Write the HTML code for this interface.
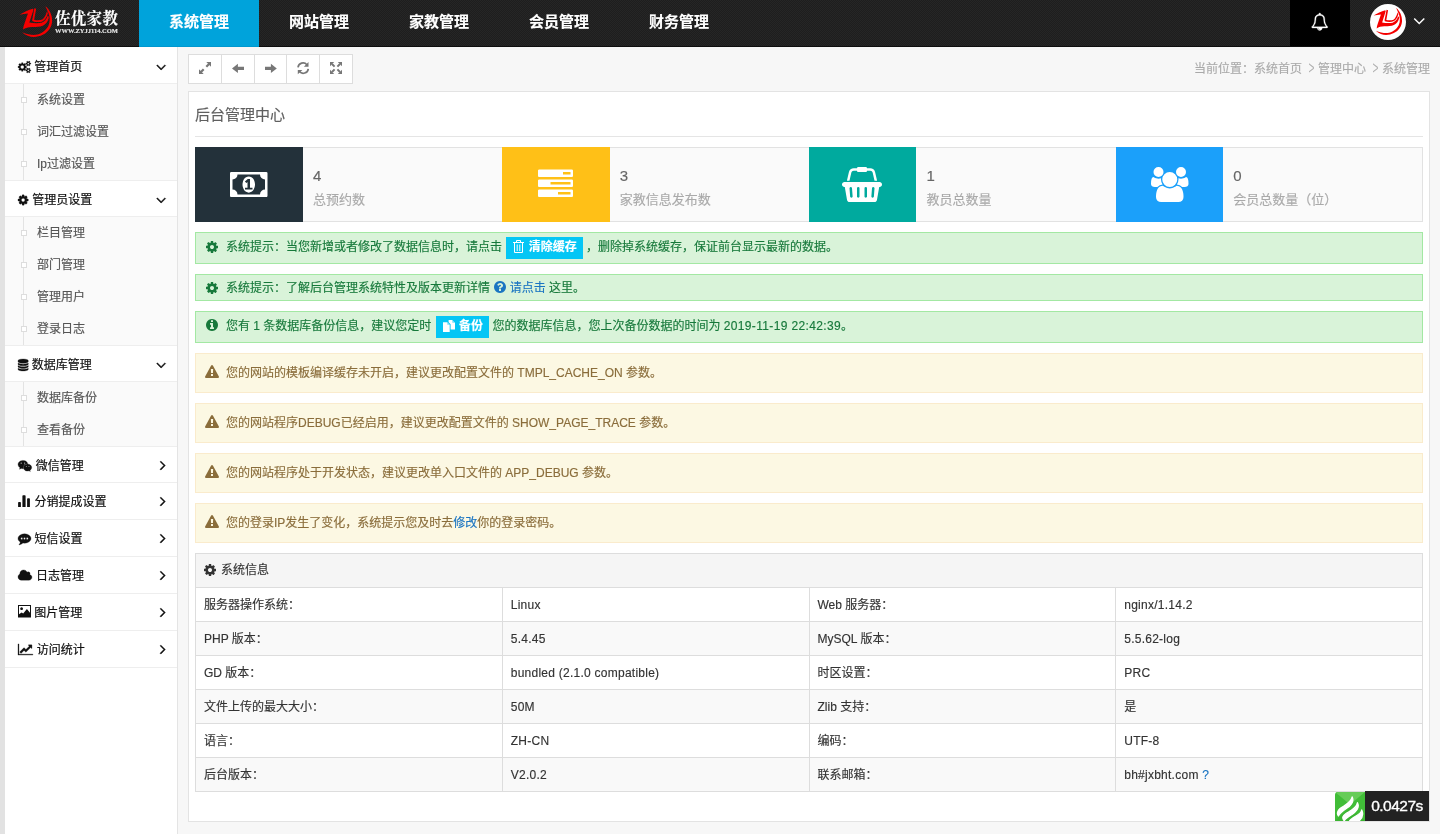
<!DOCTYPE html>
<html lang="zh-CN"><head><meta charset="utf-8"><title>后台管理中心</title>
<style>
*{box-sizing:border-box}
html,body{margin:0;padding:0}
#wrap{position:absolute;left:0;top:0;width:1440px;height:834px;will-change:transform}
body{width:1440px;height:834px;overflow:hidden;background:#f7f7f7;font-family:"Liberation Sans","Noto Sans CJK SC",sans-serif;font-size:12px;color:#333;position:relative;-webkit-text-stroke:.150px}
svg.fa,svg.ci{display:inline-block;vertical-align:middle;overflow:visible}
a{text-decoration:none;color:#1b75c2}
/* header */
#hd{position:absolute;left:0;top:0;width:1440px;height:47px;background-color:#222;background-image:repeating-conic-gradient(#1e1e1e 0 25%,#262626 0 50%);background-size:2px 2px;border-bottom:1px solid #0e0e0e}
#logo{position:absolute;left:0;top:0;width:139px;height:46px}
#logo .cn{position:absolute;left:55px;top:9px;font-family:"Liberation Serif","Noto Serif CJK SC",serif;font-weight:700;font-size:15.5px;line-height:20px;color:#fff;letter-spacing:.3px;white-space:nowrap}
#logo .en{position:absolute;left:55px;top:26px;font-family:"Liberation Serif","Noto Serif CJK SC",serif;font-weight:700;font-size:6.5px;line-height:9px;color:#e4e4e4;letter-spacing:0;white-space:nowrap}
#nav{position:absolute;left:139px;top:0;height:46px}
#nav a{float:left;width:120px;height:46px;line-height:44px;text-align:center;color:#fff;font-size:15px;font-weight:700}
#nav a.on{background:#00a3db;height:47px;box-shadow:inset 0 -1px 0 #0098cf}
#bell{position:absolute;left:1290px;top:0;width:60px;height:46px;background:#000;text-align:center;line-height:42px;color:#fff}
#bell path{stroke:#fff;stroke-width:30}
#bc i{font-style:normal;display:inline-block;width:16px;text-align:center;font-size:13px;color:#b0b0b0;transform:translate(1.500px,-.700px) scale(.78,1.38);-webkit-text-stroke:0}
#ava{position:absolute;left:1370px;top:4px;width:36px;height:36px;border-radius:50%;background:#fff;overflow:hidden}
#dd{position:absolute;left:1412.700px;top:11px;color:#fff;line-height:16px}
/* sidebar */
#strip{position:absolute;left:0;top:47px;width:5px;height:787px;background:#e2e2e2}
#side{position:absolute;left:5px;top:47px;width:173px;height:787px;background:#fff;border-right:1px solid #e4e4e4}
.mh{position:relative;height:37px;border-bottom:1px solid #eee;line-height:39px;padding-left:13px;color:#111;font-weight:400;white-space:nowrap}
.mh svg.fa,.mh svg.ci{position:relative;top:-1.400px}
.mh:first-child .t{top:1px}
.mh:first-child svg.fa,.sub+.mh svg.fa{top:.300px}
.mh:first-child .ar svg.fa,.sub+.mh .ar svg.fa{top:-.400px;left:-.700px}
.mh .ar svg.fa{left:-1px;top:-2.200px}
.sub+.mh.r4 .ar svg.fa{left:-1px;top:-.900px}
.mh svg.fa path{stroke:#111;stroke-width:40}
.mh .t{position:absolute;top:0;-webkit-text-stroke:.2px #111}
.mh .mi{position:absolute;left:13px;top:0}
.mh .ar{position:absolute;right:10px;top:.800px}
.sub{position:relative;background:#fafafa}
.sub+.mh{border-top:1px solid #eee;line-height:37px}
.sub+.mh .t{top:1px}
.sub+.mh .ar{top:.300px}
.sub:before{content:"";position:absolute;left:18px;top:0;bottom:0;width:1px;background:#e3e3e3}
.sub div{position:relative;height:32px;line-height:33px;padding-left:32px;color:#555}
.sub div:before{content:"";position:absolute;left:16px;top:13px;width:4px;height:4px;background:#fff;border:1px solid #ddd}
/* main */
#tb{position:absolute;left:188px;top:54px;height:30px;width:165px;background:#fff;border:1px solid #ddd}
#tb span{flex:1;border-left:1px solid #ddd;text-align:center;line-height:26px;color:#777}
#tb span:first-child{border-left:0}
#bc{position:absolute;right:10px;top:60px;line-height:18px;color:#aaa;white-space:nowrap}
#panel{position:absolute;left:188px;top:91px;width:1242px;height:731px;background:#fff;border:1px solid #e3e3e3}
#title{position:absolute;left:6px;top:13px;font-size:15px;line-height:20px;color:#5f5f5f}
#hr{position:absolute;left:6px;top:44px;width:1228px;height:1px;background:#e5e5e5}
#stats{position:absolute;left:6px;top:55px;width:1228px;height:75px;background:#fafafa;border:1px solid #e2e2e2}
.st{position:absolute;top:-1px;height:75px;width:307px}
.st .ib{position:absolute;left:0;top:0;width:108px;height:75px;text-align:center;line-height:74px;color:#fff}
.st .n{position:absolute;left:118px;top:20px;font-size:15px;line-height:18px;color:#666}
.st .l{position:absolute;left:118px;top:44px;font-size:13px;line-height:18px;color:#aaa;white-space:nowrap}
.al{position:absolute;left:6px;width:1228px;border:1px solid #a3e8a3;background:#d9f3d9;color:#17793b;padding-left:30px;white-space:nowrap}
.al .ic{position:absolute;left:10.250px;top:6.500px;line-height:0}
.al .ic svg{display:block}
.al.w .ic{left:9px;top:11.200px}
.al.w{border-color:#faebcc;background:#fcf8e3;color:#8a6d3b;height:40px;line-height:39px}
.btn{display:inline-block;background:#04c6f5;color:#fff;font-weight:700;height:22px;line-height:21px;padding:0 6px 0 7px;vertical-align:middle;margin:0 0 0 1px;position:relative;top:0}
.btn .gi{vertical-align:middle;margin-right:4.400px;position:relative;top:-1px}
.q{margin-left:1px;position:relative;top:-1.500px}
#tbl{position:absolute;left:6px;top:461px;width:1228px;border:1px solid #ddd}
#tbl .h{height:33px;line-height:33px;background:#f5f5f5;padding-left:8.400px;color:#333}
#tbl .h svg{position:relative;top:-1px;margin-right:1.400px}
#tbl .r{display:flex;height:34px;border-top:1px solid #ddd;line-height:35px}
#tbl .r div.v,.ls{letter-spacing:.250px}
#tbl .r:nth-child(odd){background:#f9f9f9}
#tbl .r div{flex:1;border-left:1px solid #ddd;padding-left:8px;white-space:nowrap}
#tbl .r div:first-child{border-left:0}
#tp{position:absolute;left:1335px;top:791px;width:94px;height:31px}
#tp .g{position:absolute;left:0;top:1px;width:30px;height:29px;background:#41bd38;border-radius:3px 0 0 0;overflow:hidden}
#tp .k{position:absolute;left:30px;top:0;width:64px;height:30px;background:#222;color:#fff;font-size:15.500px;letter-spacing:-.500px;line-height:29px;text-align:center;-webkit-text-stroke:.350px #fff}

</style></head>
<body>
<div id="wrap">
<div id="hd">
  <div id="logo">
    <svg width="48" height="40" viewBox="0 0 1001 834" style="position:absolute;left:14px;top:2px"><path fill="#f40000" d="M655 88C740 150 800 280 795 400C790 520 720 620 600 685C500 735 380 745 290 705C240 685 200 660 170 630C260 670 360 690 450 685C560 675 660 600 715 500C760 410 750 290 700 190C690 160 670 120 655 88ZM115 265C200 215 300 165 395 140L405 165L320 430C400 445 500 450 570 435C640 415 680 350 700 290L725 300C730 350 700 420 640 470C580 520 480 525 400 520C320 515 240 530 190 575C190 540 200 500 215 460L290 240C230 245 170 255 115 265ZM425 128L462 140L420 370C470 385 540 385 590 365C640 340 670 260 690 190L705 240C690 300 650 380 590 405C530 425 440 420 385 400L378 380Z"/></svg>
    <div class="cn">佐优家教</div>
    <div class="en">WWW.ZYJJ114.COM</div>
  </div>
  <div id="nav"><a class="on">系统管理</a><a>网站管理</a><a>家教管理</a><a>会员管理</a><a>财务管理</a></div>
  <div id="bell"><svg class="fa " width="17.50" height="17.5" viewBox="0 -1536 1792 1792" style=""><path fill="#fff" transform="scale(1,-1)" d="M912 -160q0 16 -16 16q-59 0 -101.5 42.5t-42.5 101.5q0 16 -16 16t-16 -16q0 -73 51.5 -124.5t124.5 -51.5q16 0 16 16zM246 128h1300q-266 300 -266 832q0 51 -24 105t-69 103t-121.5 80.5t-169.5 31.5t-169.5 -31.5t-121.5 -80.5t-69 -103t-24 -105q0 -532 -266 -832z
M1728 128q0 -52 -38 -90t-90 -38h-448q0 -106 -75 -181t-181 -75t-181 75t-75 181h-448q-52 0 -90 38t-38 90q50 42 91 88t85 119.5t74.5 158.5t50 206t19.5 260q0 152 117 282.5t307 158.5q-8 19 -8 39q0 40 28 68t68 28t68 -28t28 -68q0 -20 -8 -39q190 -28 307 -158.5
t117 -282.5q0 -139 19.5 -260t50 -206t74.5 -158.5t85 -119.5t91 -88z"/></svg></div>
  <div id="ava"><svg width="36" height="36" viewBox="30 -10 860 860"><path fill="#f40000" d="M655 88C740 150 800 280 795 400C790 520 720 620 600 685C500 735 380 745 290 705C240 685 200 660 170 630C260 670 360 690 450 685C560 675 660 600 715 500C760 410 750 290 700 190C690 160 670 120 655 88ZM115 265C200 215 300 165 395 140L405 165L320 430C400 445 500 450 570 435C640 415 680 350 700 290L725 300C730 350 700 420 640 470C580 520 480 525 400 520C320 515 240 530 190 575C190 540 200 500 215 460L290 240C230 245 170 255 115 265ZM425 128L462 140L420 370C470 385 540 385 590 365C640 340 670 260 690 190L705 240C690 300 650 380 590 405C530 425 440 420 385 400L378 380Z"/></svg></div>
  <div id="dd"><svg class="fa " width="12.54" height="19.5" viewBox="0 -1536 1152 1792" style=""><path fill="#fff" transform="scale(1,-1)" d="M1075 800q0 -13 -10 -23l-466 -466q-10 -10 -23 -10t-23 10l-466 466q-10 10 -10 23t10 23l50 50q10 10 23 10t23 -10l393 -393l393 393q10 10 23 10t23 -10l50 -50q10 -10 10 -23z"/></svg></div>
</div>
<div id="strip"></div>
<div id="side">
  <div class="mh"><span class="mi"><svg class="fa " width="12.86" height="12" viewBox="0 -1536 1920 1792" style=""><path fill="#111" transform="scale(1,-1)" d="M896 640q0 106 -75 181t-181 75t-181 -75t-75 -181t75 -181t181 -75t181 75t75 181zM1664 128q0 52 -38 90t-90 38t-90 -38t-38 -90q0 -53 37.5 -90.5t90.5 -37.5t90.5 37.5t37.5 90.5zM1664 1152q0 52 -38 90t-90 38t-90 -38t-38 -90q0 -53 37.5 -90.5t90.5 -37.5
t90.5 37.5t37.5 90.5zM1280 731v-185q0 -10 -7 -19.5t-16 -10.5l-155 -24q-11 -35 -32 -76q34 -48 90 -115q7 -11 7 -20q0 -12 -7 -19q-23 -30 -82.5 -89.5t-78.5 -59.5q-11 0 -21 7l-115 90q-37 -19 -77 -31q-11 -108 -23 -155q-7 -24 -30 -24h-186q-11 0 -20 7.5t-10 17.5
l-23 153q-34 10 -75 31l-118 -89q-7 -7 -20 -7q-11 0 -21 8q-144 133 -144 160q0 9 7 19q10 14 41 53t47 61q-23 44 -35 82l-152 24q-10 1 -17 9.5t-7 19.5v185q0 10 7 19.5t16 10.5l155 24q11 35 32 76q-34 48 -90 115q-7 11 -7 20q0 12 7 20q22 30 82 89t79 59q11 0 21 -7
l115 -90q34 18 77 32q11 108 23 154q7 24 30 24h186q11 0 20 -7.5t10 -17.5l23 -153q34 -10 75 -31l118 89q8 7 20 7q11 0 21 -8q144 -133 144 -160q0 -8 -7 -19q-12 -16 -42 -54t-45 -60q23 -48 34 -82l152 -23q10 -2 17 -10.5t7 -19.5zM1920 198v-140q0 -16 -149 -31
q-12 -27 -30 -52q51 -113 51 -138q0 -4 -4 -7q-122 -71 -124 -71q-8 0 -46 47t-52 68q-20 -2 -30 -2t-30 2q-14 -21 -52 -68t-46 -47q-2 0 -124 71q-4 3 -4 7q0 25 51 138q-18 25 -30 52q-149 15 -149 31v140q0 16 149 31q13 29 30 52q-51 113 -51 138q0 4 4 7q4 2 35 20
t59 34t30 16q8 0 46 -46.5t52 -67.5q20 2 30 2t30 -2q51 71 92 112l6 2q4 0 124 -70q4 -3 4 -7q0 -25 -51 -138q17 -23 30 -52q149 -15 149 -31zM1920 1222v-140q0 -16 -149 -31q-12 -27 -30 -52q51 -113 51 -138q0 -4 -4 -7q-122 -71 -124 -71q-8 0 -46 47t-52 68
q-20 -2 -30 -2t-30 2q-14 -21 -52 -68t-46 -47q-2 0 -124 71q-4 3 -4 7q0 25 51 138q-18 25 -30 52q-149 15 -149 31v140q0 16 149 31q13 29 30 52q-51 113 -51 138q0 4 4 7q4 2 35 20t59 34t30 16q8 0 46 -46.5t52 -67.5q20 2 30 2t30 -2q51 71 92 112l6 2q4 0 124 -70
q4 -3 4 -7q0 -25 -51 -138q17 -23 30 -52q149 -15 149 -31z"/></svg></span><span class="t" style="left:29.30px">管理首页</span><span class="ar"><svg class="fa " width="10.29" height="16" viewBox="0 -1536 1152 1792" style=""><path fill="#111" transform="scale(1,-1)" d="M1075 800q0 -13 -10 -23l-466 -466q-10 -10 -23 -10t-23 10l-466 466q-10 10 -10 23t10 23l50 50q10 10 23 10t23 -10l393 -393l393 393q10 10 23 10t23 -10l50 -50q10 -10 10 -23z"/></svg></span></div>
  <div class="sub"><div>系统设置</div><div>词汇过滤设置</div><div>Ip过滤设置</div></div>
  <div class="mh"><span class="mi"><svg class="fa " width="10.29" height="12" viewBox="0 -1536 1536 1792" style=""><path fill="#111" transform="scale(1,-1)" d="M1024 640q0 106 -75 181t-181 75t-181 -75t-75 -181t75 -181t181 -75t181 75t75 181zM1536 749v-222q0 -12 -8 -23t-20 -13l-185 -28q-19 -54 -39 -91q35 -50 107 -138q10 -12 10 -25t-9 -23q-27 -37 -99 -108t-94 -71q-12 0 -26 9l-138 108q-44 -23 -91 -38
q-16 -136 -29 -186q-7 -28 -36 -28h-222q-14 0 -24.5 8.5t-11.5 21.5l-28 184q-49 16 -90 37l-141 -107q-10 -9 -25 -9q-14 0 -25 11q-126 114 -165 168q-7 10 -7 23q0 12 8 23q15 21 51 66.5t54 70.5q-27 50 -41 99l-183 27q-13 2 -21 12.5t-8 23.5v222q0 12 8 23t19 13
l186 28q14 46 39 92q-40 57 -107 138q-10 12 -10 24q0 10 9 23q26 36 98.5 107.5t94.5 71.5q13 0 26 -10l138 -107q44 23 91 38q16 136 29 186q7 28 36 28h222q14 0 24.5 -8.5t11.5 -21.5l28 -184q49 -16 90 -37l142 107q9 9 24 9q13 0 25 -10q129 -119 165 -170q7 -8 7 -22
q0 -12 -8 -23q-15 -21 -51 -66.5t-54 -70.5q26 -50 41 -98l183 -28q13 -2 21 -12.5t8 -23.5z"/></svg></span><span class="t" style="left:27.30px">管理员设置</span><span class="ar"><svg class="fa " width="10.29" height="16" viewBox="0 -1536 1152 1792" style=""><path fill="#111" transform="scale(1,-1)" d="M1075 800q0 -13 -10 -23l-466 -466q-10 -10 -23 -10t-23 10l-466 466q-10 10 -10 23t10 23l50 50q10 10 23 10t23 -10l393 -393l393 393q10 10 23 10t23 -10l50 -50q10 -10 10 -23z"/></svg></span></div>
  <div class="sub"><div>栏目管理</div><div>部门管理</div><div>管理用户</div><div>登录日志</div></div>
  <div class="mh"><span class="mi"><svg class="fa " width="10.29" height="12" viewBox="0 -1536 1536 1792" style=""><path fill="#111" transform="scale(1,-1)" d="M768 768q237 0 443 43t325 127v-170q0 -69 -103 -128t-280 -93.5t-385 -34.5t-385 34.5t-280 93.5t-103 128v170q119 -84 325 -127t443 -43zM768 0q237 0 443 43t325 127v-170q0 -69 -103 -128t-280 -93.5t-385 -34.5t-385 34.5t-280 93.5t-103 128v170q119 -84 325 -127
t443 -43zM768 384q237 0 443 43t325 127v-170q0 -69 -103 -128t-280 -93.5t-385 -34.5t-385 34.5t-280 93.5t-103 128v170q119 -84 325 -127t443 -43zM768 1536q208 0 385 -34.5t280 -93.5t103 -128v-128q0 -69 -103 -128t-280 -93.5t-385 -34.5t-385 34.5t-280 93.5
t-103 128v128q0 69 103 128t280 93.5t385 34.5z"/></svg></span><span class="t" style="left:26.70px">数据库管理</span><span class="ar"><svg class="fa " width="10.29" height="16" viewBox="0 -1536 1152 1792" style=""><path fill="#111" transform="scale(1,-1)" d="M1075 800q0 -13 -10 -23l-466 -466q-10 -10 -23 -10t-23 10l-466 466q-10 10 -10 23t10 23l50 50q10 10 23 10t23 -10l393 -393l393 393q10 10 23 10t23 -10l50 -50q10 -10 10 -23z"/></svg></span></div>
  <div class="sub"><div>数据库备份</div><div>查看备份</div></div>
  <div class="mh r4"><span class="mi"><svg class="fa " width="13.71" height="12" viewBox="0 -1536 2048 1792" style=""><path fill="#111" transform="scale(1,-1)" d="M580 1075q0 41 -25 66t-66 25q-43 0 -76 -25.5t-33 -65.5q0 -39 33 -64.5t76 -25.5q41 0 66 24.5t25 65.5zM1323 568q0 28 -25.5 50t-65.5 22q-27 0 -49.5 -22.5t-22.5 -49.5q0 -28 22.5 -50.5t49.5 -22.5q40 0 65.5 22t25.5 51zM1087 1075q0 41 -24.5 66t-65.5 25
q-43 0 -76 -25.5t-33 -65.5q0 -39 33 -64.5t76 -25.5q41 0 65.5 24.5t24.5 65.5zM1722 568q0 28 -26 50t-65 22q-27 0 -49.5 -22.5t-22.5 -49.5q0 -28 22.5 -50.5t49.5 -22.5q39 0 65 22t26 51zM1456 965q-31 4 -70 4q-169 0 -311 -77t-223.5 -208.5t-81.5 -287.5
q0 -78 23 -152q-35 -3 -68 -3q-26 0 -50 1.5t-55 6.5t-44.5 7t-54.5 10.5t-50 10.5l-253 -127l72 218q-290 203 -290 490q0 169 97.5 311t264 223.5t363.5 81.5q176 0 332.5 -66t262 -182.5t136.5 -260.5zM2048 404q0 -117 -68.5 -223.5t-185.5 -193.5l55 -181l-199 109
q-150 -37 -218 -37q-169 0 -311 70.5t-223.5 191.5t-81.5 264t81.5 264t223.5 191.5t311 70.5q161 0 303 -70.5t227.5 -192t85.5 -263.5z"/></svg></span><span class="t" style="left:30.75px">微信管理</span><span class="ar"><svg class="fa " width="5.71" height="16" viewBox="0 -1536 640 1792" style=""><path fill="#111" transform="scale(1,-1)" d="M595 576q0 -13 -10 -23l-466 -466q-10 -10 -23 -10t-23 10l-50 50q-10 10 -10 23t10 23l393 393l-393 393q-10 10 -10 23t10 23l50 50q10 10 23 10t23 -10l466 -466q10 -10 10 -23z"/></svg></span></div>
  <div class="mh"><span class="mi"><svg class="ci" width="12" height="12" viewBox="0 0 12 12" style="top:-1.600px"><path fill="#111" d="M.100 7.800Q.100 7 .900 7H2.100Q2.900 7 2.900 7.800V11.900H.100ZM4.400 1Q4.400 .150 5.200 .150H6.800Q7.600 .150 7.600 1V11.900H4.400ZM9.100 4.100Q9.100 3.300 9.900 3.300H11.100Q11.900 3.300 11.900 4.100V11.900H9.100Z"/></svg></span><span class="t" style="left:29.50px">分销提成设置</span><span class="ar"><svg class="fa " width="5.71" height="16" viewBox="0 -1536 640 1792" style=""><path fill="#111" transform="scale(1,-1)" d="M595 576q0 -13 -10 -23l-466 -466q-10 -10 -23 -10t-23 10l-50 50q-10 10 -10 23t10 23l393 393l-393 393q-10 10 -10 23t10 23l50 50q10 10 23 10t23 -10l466 -466q10 -10 10 -23z"/></svg></span></div>
  <div class="mh"><span class="mi"><svg class="fa " width="13.00" height="13" viewBox="0 -1536 1792 1792" style=""><path fill="#111" transform="scale(1,-1)" d="M640 640q0 53 -37.5 90.5t-90.5 37.5t-90.5 -37.5t-37.5 -90.5t37.5 -90.5t90.5 -37.5t90.5 37.5t37.5 90.5zM1024 640q0 53 -37.5 90.5t-90.5 37.5t-90.5 -37.5t-37.5 -90.5t37.5 -90.5t90.5 -37.5t90.5 37.5t37.5 90.5zM1408 640q0 53 -37.5 90.5t-90.5 37.5
t-90.5 -37.5t-37.5 -90.5t37.5 -90.5t90.5 -37.5t90.5 37.5t37.5 90.5zM1792 640q0 -174 -120 -321.5t-326 -233t-450 -85.5q-110 0 -211 18q-173 -173 -435 -229q-52 -10 -86 -13q-12 -1 -22 6t-13 18q-4 15 20 37q5 5 23.5 21.5t25.5 23.5t23.5 25.5t24 31.5t20.5 37
t20 48t14.5 57.5t12.5 72.5q-146 90 -229.5 216.5t-83.5 269.5q0 174 120 321.5t326 233t450 85.5t450 -85.5t326 -233t120 -321.5z"/></svg></span><span class="t" style="left:29.50px">短信设置</span><span class="ar"><svg class="fa " width="5.71" height="16" viewBox="0 -1536 640 1792" style=""><path fill="#111" transform="scale(1,-1)" d="M595 576q0 -13 -10 -23l-466 -466q-10 -10 -23 -10t-23 10l-50 50q-10 10 -10 23t10 23l393 393l-393 393q-10 10 -10 23t10 23l50 50q10 10 23 10t23 -10l466 -466q10 -10 10 -23z"/></svg></span></div>
  <div class="mh"><span class="mi"><svg class="fa " width="13.93" height="13" viewBox="0 -1536 1920 1792" style=""><path fill="#111" transform="scale(1,-1)" d="M1920 384q0 -159 -112.5 -271.5t-271.5 -112.5h-1088q-185 0 -316.5 131.5t-131.5 316.5q0 132 71 241.5t187 163.5q-2 28 -2 43q0 212 150 362t362 150q158 0 286.5 -88t187.5 -230q70 62 166 62q106 0 181 -75t75 -181q0 -75 -41 -138q129 -30 213 -134.5t84 -239.5z
"/></svg></span><span class="t" style="left:31.10px">日志管理</span><span class="ar"><svg class="fa " width="5.71" height="16" viewBox="0 -1536 640 1792" style=""><path fill="#111" transform="scale(1,-1)" d="M595 576q0 -13 -10 -23l-466 -466q-10 -10 -23 -10t-23 10l-50 50q-10 10 -10 23t10 23l393 393l-393 393q-10 10 -10 23t10 23l50 50q10 10 23 10t23 -10l466 -466q10 -10 10 -23z"/></svg></span></div>
  <div class="mh"><span class="mi"><svg class="ci" width="13" height="12.400" viewBox="0 0 13 12.400" style="top:-2.500px"><path fill="#111" fill-rule="evenodd" d="M0 0H13V12.400H0ZM1 1V9.200L3.600 7.400L5.200 8.600L8.900 3.900L12 7.700V1ZM3.600 2.300A1.400 1.400 0 1 1 3.590 2.300Z"/></svg></span><span class="t" style="left:29.30px">图片管理</span><span class="ar"><svg class="fa " width="5.71" height="16" viewBox="0 -1536 640 1792" style=""><path fill="#111" transform="scale(1,-1)" d="M595 576q0 -13 -10 -23l-466 -466q-10 -10 -23 -10t-23 10l-50 50q-10 10 -10 23t10 23l393 393l-393 393q-10 10 -10 23t10 23l50 50q10 10 23 10t23 -10l466 -466q10 -10 10 -23z"/></svg></span></div>
  <div class="mh"><span class="mi"><svg class="fa " width="14.86" height="13" viewBox="0 -1536 2048 1792" style=""><path fill="#111" transform="scale(1,-1)" d="M2048 0v-128h-2048v1536h128v-1408h1920zM1920 1248v-435q0 -21 -19.5 -29.5t-35.5 7.5l-121 121l-633 -633q-10 -10 -23 -10t-23 10l-233 233l-416 -416l-192 192l585 585q10 10 23 10t23 -10l233 -233l464 464l-121 121q-16 16 -7.5 35.5t29.5 19.5h435q14 0 23 -9
t9 -23z"/></svg></span><span class="t" style="left:31.70px">访问统计</span><span class="ar"><svg class="fa " width="5.71" height="16" viewBox="0 -1536 640 1792" style=""><path fill="#111" transform="scale(1,-1)" d="M595 576q0 -13 -10 -23l-466 -466q-10 -10 -23 -10t-23 10l-50 50q-10 10 -10 23t10 23l393 393l-393 393q-10 10 -10 23t10 23l50 50q10 10 23 10t23 -10l466 -466q10 -10 10 -23z"/></svg></span></div>
</div>
<div id="tb"><svg width="166" height="30" viewBox="188 54 166 30" style="position:absolute;left:-1px;top:-1px">
<g fill="none" stroke="#ddd" stroke-width="1"><path d="M221.5 54V84M254.5 54V84M286.5 54V84M319.5 54V84"/></g>
<g fill="#777" stroke="none">
<path d="M211 62H206.300L211 66.700ZM199 74H203.700L199 69.300Z"/>
<path d="M232 68.400L237.900 63.800V66.800H244V70.100H237.900V73Z"/>
<path d="M276.800 68.400L270.900 63.800V66.800H265V70.100H270.900V73Z"/>
<path d="M308.500 61.900V66.700H303.900ZM297.800 69.900H302.400L297.800 74.300Z"/>
<path d="M330 62H334.200L330 66.200ZM342 62H337.800L342 66.200ZM330 74H334.200L330 69.800ZM342 74H337.800L342 69.800Z"/>
</g>
<g fill="none" stroke="#777" stroke-width="2.200"><path d="M209.300 63.700L206.300 66.700M200.700 72.300L203.700 69.300"/><path d="M332 64L334.600 66.600M340 64L337.400 66.600M332 72L334.600 69.400M340 72L337.400 69.400" stroke-width="2"/></g>
<g fill="none" stroke="#777" stroke-width="1.700"><path d="M298 67.400A5.100 5.100 0 0 1 306.900 64.700"/><path d="M308.300 68.800A5.100 5.100 0 0 1 299.400 71.500"/></g>
</svg></div>
<div id="bc">当前位置：系统首页<i>&gt;</i>管理中心<i>&gt;</i>系统管理</div>
<div id="panel">
  <div id="title">后台管理中心</div>
  <div id="hr"></div>
  <div id="stats">
    <div class="st" style="left:-1px"><div class="ib" style="background:#23313a"><svg class="fa " width="37.50" height="35" viewBox="0 -1536 1920 1792" style=""><path fill="#fff" transform="scale(1,-1)" d="M768 384h384v96h-128v448h-114l-148 -137l77 -80q42 37 55 57h2v-288h-128v-96zM1280 640q0 -70 -21 -142t-59.5 -134t-101.5 -101t-138 -39t-138 39t-101.5 101t-59.5 134t-21 142t21 142t59.5 134t101.5 101t138 39t138 -39t101.5 -101t59.5 -134t21 -142zM1792 384
v512q-106 0 -181 75t-75 181h-1152q0 -106 -75 -181t-181 -75v-512q106 0 181 -75t75 -181h1152q0 106 75 181t181 75zM1920 1216v-1152q0 -26 -19 -45t-45 -19h-1792q-26 0 -45 19t-19 45v1152q0 26 19 45t45 19h1792q26 0 45 -19t19 -45z"/></svg></div><div class="n">4</div><div class="l">总预约数</div></div>
    <div class="st" style="left:305.750px"><div class="ib" style="background:#ffc017"><svg class="fa " width="35.00" height="35" viewBox="0 -1536 1792 1792" style=""><path fill="#fff" transform="scale(1,-1)" d="M1024 128h640v128h-640v-128zM640 640h1024v128h-1024v-128zM1280 1152h384v128h-384v-128zM1792 320v-256q0 -26 -19 -45t-45 -19h-1664q-26 0 -45 19t-19 45v256q0 26 19 45t45 19h1664q26 0 45 -19t19 -45zM1792 832v-256q0 -26 -19 -45t-45 -19h-1664q-26 0 -45 19
t-19 45v256q0 26 19 45t45 19h1664q26 0 45 -19t19 -45zM1792 1344v-256q0 -26 -19 -45t-45 -19h-1664q-26 0 -45 19t-19 45v256q0 26 19 45t45 19h1664q26 0 45 -19t19 -45z"/></svg></div><div class="n">3</div><div class="l">家教信息发布数</div></div>
    <div class="st" style="left:612.500px"><div class="ib" style="background:#00aa9e;width:107.400px"><svg class="fa " width="40.00" height="35" viewBox="0 -1536 2048 1792" style=""><path fill="#fff" transform="scale(1,-1)" d="M1920 768q53 0 90.5 -37.5t37.5 -90.5t-37.5 -90.5t-90.5 -37.5h-15l-115 -662q-8 -46 -44 -76t-82 -30h-1280q-46 0 -82 30t-44 76l-115 662h-15q-53 0 -90.5 37.5t-37.5 90.5t37.5 90.5t90.5 37.5h1792zM485 -32q26 2 43.5 22.5t15.5 46.5l-32 416q-2 26 -22.5 43.5
t-46.5 15.5t-43.5 -22.5t-15.5 -46.5l32 -416q2 -25 20.5 -42t43.5 -17h5zM896 32v416q0 26 -19 45t-45 19t-45 -19t-19 -45v-416q0 -26 19 -45t45 -19t45 19t19 45zM1280 32v416q0 26 -19 45t-45 19t-45 -19t-19 -45v-416q0 -26 19 -45t45 -19t45 19t19 45zM1632 27l32 416
q2 26 -15.5 46.5t-43.5 22.5t-46.5 -15.5t-22.5 -43.5l-32 -416q-2 -26 15.5 -46.5t43.5 -22.5h5q25 0 43.5 17t20.5 42zM476 1244l-93 -412h-132l101 441q19 88 89 143.5t160 55.5h167q0 26 19 45t45 19h384q26 0 45 -19t19 -45h167q90 0 160 -55.5t89 -143.5l101 -441
h-132l-93 412q-11 44 -45.5 72t-79.5 28h-167q0 -26 -19 -45t-45 -19h-384q-26 0 -45 19t-19 45h-167q-45 0 -79.5 -28t-45.5 -72z"/></svg></div><div class="n">1</div><div class="l">教员总数量</div></div>
    <div class="st" style="left:919.250px"><div class="ib" style="background:#1ba0fa;left:.750px;width:107.250px"><svg class="fa " width="37.50" height="35" viewBox="0 -1536 1920 1792" style=""><path fill="#fff" transform="scale(1,-1)" d="M593 640q-162 -5 -265 -128h-134q-82 0 -138 40.5t-56 118.5q0 353 124 353q6 0 43.5 -21t97.5 -42.5t119 -21.5q67 0 133 23q-5 -37 -5 -66q0 -139 81 -256zM1664 3q0 -120 -73 -189.5t-194 -69.5h-874q-121 0 -194 69.5t-73 189.5q0 53 3.5 103.5t14 109t26.5 108.5
t43 97.5t62 81t85.5 53.5t111.5 20q10 0 43 -21.5t73 -48t107 -48t135 -21.5t135 21.5t107 48t73 48t43 21.5q61 0 111.5 -20t85.5 -53.5t62 -81t43 -97.5t26.5 -108.5t14 -109t3.5 -103.5zM640 1280q0 -106 -75 -181t-181 -75t-181 75t-75 181t75 181t181 75t181 -75
t75 -181zM1344 896q0 -159 -112.5 -271.5t-271.5 -112.5t-271.5 112.5t-112.5 271.5t112.5 271.5t271.5 112.5t271.5 -112.5t112.5 -271.5zM1920 671q0 -78 -56 -118.5t-138 -40.5h-134q-103 123 -265 128q81 117 81 256q0 29 -5 66q66 -23 133 -23q59 0 119 21.5t97.5 42.5
t43.5 21q124 0 124 -353zM1792 1280q0 -106 -75 -181t-181 -75t-181 75t-75 181t75 181t181 75t181 -75t75 -181z"/></svg></div><div class="n">0</div><div class="l">会员总数量（位）</div></div>
  </div>
  <div class="al" style="top:140px;height:32px;line-height:29px"><span class="ic"><svg class="fa " width="12.00" height="14" viewBox="0 -1536 1536 1792" style=""><path fill="currentColor" transform="scale(1,-1)" d="M1024 640q0 106 -75 181t-181 75t-181 -75t-75 -181t75 -181t181 -75t181 75t75 181zM1536 749v-222q0 -12 -8 -23t-20 -13l-185 -28q-19 -54 -39 -91q35 -50 107 -138q10 -12 10 -25t-9 -23q-27 -37 -99 -108t-94 -71q-12 0 -26 9l-138 108q-44 -23 -91 -38
q-16 -136 -29 -186q-7 -28 -36 -28h-222q-14 0 -24.5 8.5t-11.5 21.5l-28 184q-49 16 -90 37l-141 -107q-10 -9 -25 -9q-14 0 -25 11q-126 114 -165 168q-7 10 -7 23q0 12 8 23q15 21 51 66.5t54 70.5q-27 50 -41 99l-183 27q-13 2 -21 12.5t-8 23.5v222q0 12 8 23t19 13
l186 28q14 46 39 92q-40 57 -107 138q-10 12 -10 24q0 10 9 23q26 36 98.5 107.5t94.5 71.5q13 0 26 -10l138 -107q44 23 91 38q16 136 29 186q7 28 36 28h222q14 0 24.5 -8.5t11.5 -21.5l28 -184q49 -16 90 -37l142 107q9 9 24 9q13 0 25 -10q129 -119 165 -170q7 -8 7 -22
q0 -12 -8 -23q-15 -21 -51 -66.5t-54 -70.5q26 -50 41 -98l183 -28q13 -2 21 -12.5t8 -23.5z"/></svg></span>系统提示：当您新增或者修改了数据信息时，请点击 <span class="btn"><svg class="gi" width="11" height="13" viewBox="0 0 11 13"><path fill="none" stroke="#fff" stroke-width="1" d="M3.500 2V.500H7.500V2M0 2.500H11M1.500 3V12.500H9.500V3M4.200 4.500V11M6.800 4.500V11"/></svg>清除缓存</span> ，删除掉系统缓存，保证前台显示最新的数据。</div>
  <div class="al" style="top:182px;height:27px;line-height:27px"><span class="ic" style="top:5.750px"><svg class="fa " width="12.00" height="14" viewBox="0 -1536 1536 1792" style=""><path fill="currentColor" transform="scale(1,-1)" d="M1024 640q0 106 -75 181t-181 75t-181 -75t-75 -181t75 -181t181 -75t181 75t75 181zM1536 749v-222q0 -12 -8 -23t-20 -13l-185 -28q-19 -54 -39 -91q35 -50 107 -138q10 -12 10 -25t-9 -23q-27 -37 -99 -108t-94 -71q-12 0 -26 9l-138 108q-44 -23 -91 -38
q-16 -136 -29 -186q-7 -28 -36 -28h-222q-14 0 -24.5 8.5t-11.5 21.5l-28 184q-49 16 -90 37l-141 -107q-10 -9 -25 -9q-14 0 -25 11q-126 114 -165 168q-7 10 -7 23q0 12 8 23q15 21 51 66.5t54 70.5q-27 50 -41 99l-183 27q-13 2 -21 12.5t-8 23.5v222q0 12 8 23t19 13
l186 28q14 46 39 92q-40 57 -107 138q-10 12 -10 24q0 10 9 23q26 36 98.5 107.5t94.5 71.5q13 0 26 -10l138 -107q44 23 91 38q16 136 29 186q7 28 36 28h222q14 0 24.5 -8.5t11.5 -21.5l28 -184q49 -16 90 -37l142 107q9 9 24 9q13 0 25 -10q129 -119 165 -170q7 -8 7 -22
q0 -12 -8 -23q-15 -21 -51 -66.5t-54 -70.5q26 -50 41 -98l183 -28q13 -2 21 -12.5t8 -23.5z"/></svg></span>系统提示：了解后台管理系统特性及版本更新详情 <a><span class="q"><svg class="fa " width="12.00" height="14" viewBox="0 -1536 1536 1792" style=""><path fill="currentColor" transform="scale(1,-1)" d="M896 160v192q0 14 -9 23t-23 9h-192q-14 0 -23 -9t-9 -23v-192q0 -14 9 -23t23 -9h192q14 0 23 9t9 23zM1152 832q0 88 -55.5 163t-138.5 116t-170 41q-243 0 -371 -213q-15 -24 8 -42l132 -100q7 -6 19 -6q16 0 25 12q53 68 86 92q34 24 86 24q48 0 85.5 -26t37.5 -59
q0 -38 -20 -61t-68 -45q-63 -28 -115.5 -86.5t-52.5 -125.5v-36q0 -14 9 -23t23 -9h192q14 0 23 9t9 23q0 19 21.5 49.5t54.5 49.5q32 18 49 28.5t46 35t44.5 48t28 60.5t12.5 81zM1536 640q0 -209 -103 -385.5t-279.5 -279.5t-385.5 -103t-385.5 103t-279.5 279.5
t-103 385.5t103 385.5t279.5 279.5t385.5 103t385.5 -103t279.5 -279.5t103 -385.5z"/></svg></span> 请点击</a> 这里。</div>
  <div class="al" style="top:219px;height:32px;line-height:28px"><span class="ic" style="top:6.250px"><svg class="fa " width="12.00" height="14" viewBox="0 -1536 1536 1792" style=""><path fill="currentColor" transform="scale(1,-1)" d="M1024 160v160q0 14 -9 23t-23 9h-96v512q0 14 -9 23t-23 9h-320q-14 0 -23 -9t-9 -23v-160q0 -14 9 -23t23 -9h96v-320h-96q-14 0 -23 -9t-9 -23v-160q0 -14 9 -23t23 -9h448q14 0 23 9t9 23zM896 1056v160q0 14 -9 23t-23 9h-192q-14 0 -23 -9t-9 -23v-160q0 -14 9 -23
t23 -9h192q14 0 23 9t9 23zM1536 640q0 -209 -103 -385.5t-279.5 -279.5t-385.5 -103t-385.5 103t-279.5 279.5t-103 385.5t103 385.5t279.5 279.5t385.5 103t385.5 -103t279.5 -279.5t103 -385.5z"/></svg></span>您有 1 条数据库备份信息，建议您定时 <span class="btn"><svg class="gi" width="12" height="12" viewBox="0 0 12 12"><path fill="#fff" d="M0 2.300H4.300L6.700 4.700V12H0ZM5.600 0H9.300L12 2.700V9.500H7.600V4.200L5.600 2.200Z"/><path fill="#0cc4f4" d="M4.300 2.300V4.700H6.700ZM9.300 0V2.700H12Z" opacity=".55"/></svg>备份</span> 您的数据库信息，您上次备份数据的时间为 <span class="ls" style="letter-spacing:.350px">2019-11-19 22:42:39</span>。</div>
  <div class="al w" style="top:261px"><span class="ic"><svg class="fa " width="14.00" height="14" viewBox="0 -1536 1792 1792" style=""><path fill="currentColor" transform="scale(1,-1)" d="M1024 161v190q0 14 -9.5 23.5t-22.5 9.5h-192q-13 0 -22.5 -9.5t-9.5 -23.5v-190q0 -14 9.5 -23.5t22.5 -9.5h192q13 0 22.5 9.5t9.5 23.5zM1022 535l18 459q0 12 -10 19q-13 11 -24 11h-220q-11 0 -24 -11q-10 -7 -10 -21l17 -457q0 -10 10 -16.5t24 -6.5h185
q14 0 23.5 6.5t10.5 16.5zM1008 1469l768 -1408q35 -63 -2 -126q-17 -29 -46.5 -46t-63.5 -17h-1536q-34 0 -63.5 17t-46.5 46q-37 63 -2 126l768 1408q17 31 47 49t65 18t65 -18t47 -49z"/></svg></span>您的网站的模板编译缓存未开启，建议更改配置文件的 TMPL_CACHE_ON 参数。</div>
  <div class="al w" style="top:311px"><span class="ic"><svg class="fa " width="14.00" height="14" viewBox="0 -1536 1792 1792" style=""><path fill="currentColor" transform="scale(1,-1)" d="M1024 161v190q0 14 -9.5 23.5t-22.5 9.5h-192q-13 0 -22.5 -9.5t-9.5 -23.5v-190q0 -14 9.5 -23.5t22.5 -9.5h192q13 0 22.5 9.5t9.5 23.5zM1022 535l18 459q0 12 -10 19q-13 11 -24 11h-220q-11 0 -24 -11q-10 -7 -10 -21l17 -457q0 -10 10 -16.5t24 -6.5h185
q14 0 23.5 6.5t10.5 16.5zM1008 1469l768 -1408q35 -63 -2 -126q-17 -29 -46.5 -46t-63.5 -17h-1536q-34 0 -63.5 17t-46.5 46q-37 63 -2 126l768 1408q17 31 47 49t65 18t65 -18t47 -49z"/></svg></span>您的网站程序DEBUG已经启用，建议更改配置文件的 SHOW_PAGE_TRACE 参数。</div>
  <div class="al w" style="top:361px"><span class="ic"><svg class="fa " width="14.00" height="14" viewBox="0 -1536 1792 1792" style=""><path fill="currentColor" transform="scale(1,-1)" d="M1024 161v190q0 14 -9.5 23.5t-22.5 9.5h-192q-13 0 -22.5 -9.5t-9.5 -23.5v-190q0 -14 9.5 -23.5t22.5 -9.5h192q13 0 22.5 9.5t9.5 23.5zM1022 535l18 459q0 12 -10 19q-13 11 -24 11h-220q-11 0 -24 -11q-10 -7 -10 -21l17 -457q0 -10 10 -16.5t24 -6.5h185
q14 0 23.5 6.5t10.5 16.5zM1008 1469l768 -1408q35 -63 -2 -126q-17 -29 -46.5 -46t-63.5 -17h-1536q-34 0 -63.5 17t-46.5 46q-37 63 -2 126l768 1408q17 31 47 49t65 18t65 -18t47 -49z"/></svg></span>您的网站程序处于开发状态，建议更改单入口文件的 APP_DEBUG 参数。</div>
  <div class="al w" style="top:411px"><span class="ic"><svg class="fa " width="14.00" height="14" viewBox="0 -1536 1792 1792" style=""><path fill="currentColor" transform="scale(1,-1)" d="M1024 161v190q0 14 -9.5 23.5t-22.5 9.5h-192q-13 0 -22.5 -9.5t-9.5 -23.5v-190q0 -14 9.5 -23.5t22.5 -9.5h192q13 0 22.5 9.5t9.5 23.5zM1022 535l18 459q0 12 -10 19q-13 11 -24 11h-220q-11 0 -24 -11q-10 -7 -10 -21l17 -457q0 -10 10 -16.5t24 -6.5h185
q14 0 23.5 6.5t10.5 16.5zM1008 1469l768 -1408q35 -63 -2 -126q-17 -29 -46.5 -46t-63.5 -17h-1536q-34 0 -63.5 17t-46.5 46q-37 63 -2 126l768 1408q17 31 47 49t65 18t65 -18t47 -49z"/></svg></span>您的登录IP发生了变化，系统提示您及时去<a>修改</a>你的登录密码。</div>
  <div id="tbl">
    <div class="h"><svg class="fa " width="12.00" height="14" viewBox="0 -1536 1536 1792" style=""><path fill="#333" transform="scale(1,-1)" d="M1024 640q0 106 -75 181t-181 75t-181 -75t-75 -181t75 -181t181 -75t181 75t75 181zM1536 749v-222q0 -12 -8 -23t-20 -13l-185 -28q-19 -54 -39 -91q35 -50 107 -138q10 -12 10 -25t-9 -23q-27 -37 -99 -108t-94 -71q-12 0 -26 9l-138 108q-44 -23 -91 -38
q-16 -136 -29 -186q-7 -28 -36 -28h-222q-14 0 -24.5 8.5t-11.5 21.5l-28 184q-49 16 -90 37l-141 -107q-10 -9 -25 -9q-14 0 -25 11q-126 114 -165 168q-7 10 -7 23q0 12 8 23q15 21 51 66.5t54 70.5q-27 50 -41 99l-183 27q-13 2 -21 12.5t-8 23.5v222q0 12 8 23t19 13
l186 28q14 46 39 92q-40 57 -107 138q-10 12 -10 24q0 10 9 23q26 36 98.5 107.5t94.5 71.5q13 0 26 -10l138 -107q44 23 91 38q16 136 29 186q7 28 36 28h222q14 0 24.5 -8.5t11.5 -21.5l28 -184q49 -16 90 -37l142 107q9 9 24 9q13 0 25 -10q129 -119 165 -170q7 -8 7 -22
q0 -12 -8 -23q-15 -21 -51 -66.5t-54 -70.5q26 -50 41 -98l183 -28q13 -2 21 -12.5t8 -23.5z"/></svg> 系统信息</div>
    <div class="r"><div>服务器操作系统：</div><div class="v">Linux</div><div>Web 服务器：</div><div class="v">nginx/1.14.2</div></div>
    <div class="r"><div>PHP 版本：</div><div class="v">5.4.45</div><div>MySQL 版本：</div><div class="v">5.5.62-log</div></div>
    <div class="r"><div>GD 版本：</div><div class="v">bundled (2.1.0 compatible)</div><div>时区设置：</div><div class="v">PRC</div></div>
    <div class="r"><div>文件上传的最大大小：</div><div class="v">50M</div><div>Zlib 支持：</div><div class="v">是</div></div>
    <div class="r"><div>语言：</div><div class="v">ZH-CN</div><div>编码：</div><div class="v">UTF-8</div></div>
    <div class="r"><div>后台版本：</div><div class="v">V2.0.2</div><div>联系邮箱：</div><div class="v">bh#jxbht.com <a>?</a></div></div>
  </div>
</div>
<div id="tp"><div class="g"><svg width="30" height="29" viewBox="0 0 30 29"><path fill="#66cc58" d="M0 0H30L15 12.500Z"/><path fill="#36a82c" d="M0 29H30L15 16Z" opacity=".45"/><path fill="#fff" stroke="#fff" stroke-width="1.300" stroke-linejoin="round" d="M17.200 5C19 9 18 12 12 16C7 19.500 4.500 21.500 3.400 24C1.500 21 2 19 5 16.500C10 13 16 11 17.200 5ZM22.500 10.700C24.500 15 23 18.500 17 22.500C13 25 10.500 26.500 9.200 28.800C6.800 26 7.500 24 11 21.500C16 18.500 21.500 16.500 22.500 10.700ZM26.700 18C28.500 22 27.500 26 24 29L14.500 29C15.500 27.500 18 26 21 24C24.500 22 26.500 20.500 26.700 18Z"/></svg></div><div class="k">0.0427s</div></div>

</div>
</body></html>
